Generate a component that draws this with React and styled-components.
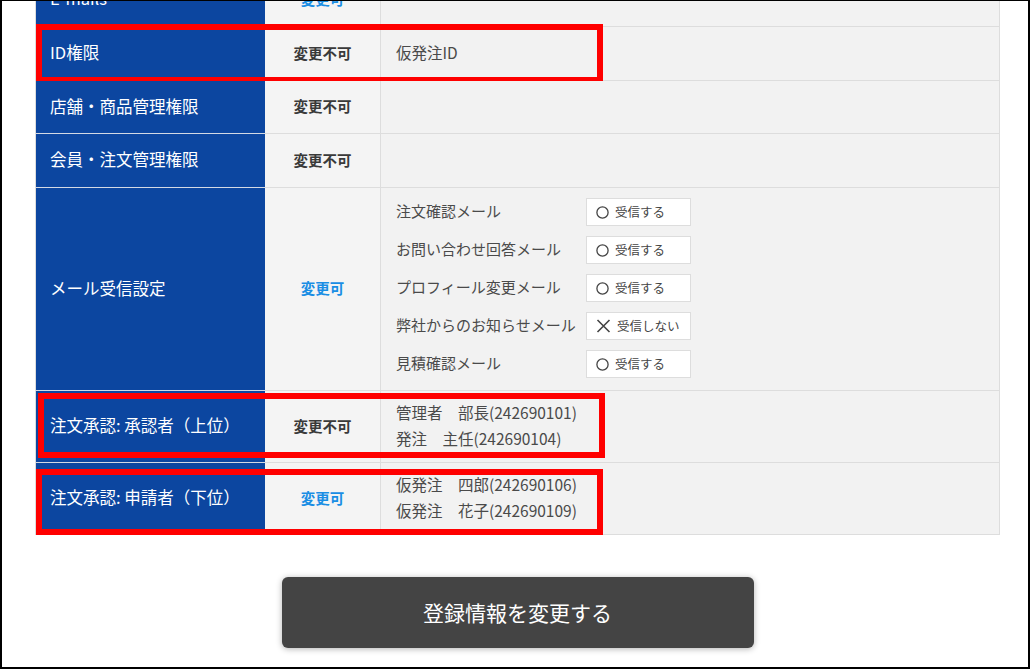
import React from "react";
import styled, { createGlobalStyle } from "styled-components";

const GlobalStyle = createGlobalStyle`
  html, body {
    margin: 0;
    padding: 0;
    background: #fff;
  }
  body {
    font-family: "Noto Sans CJK JP", "Noto Sans", sans-serif;
  }
`;

const Frame = styled.div`
  box-sizing: border-box;
  width: 1030px;
  height: 669px;
  border-top: 1px solid #000;
  border-left: 2px solid #000;
  border-right: 2px solid #000;
  border-bottom: 2px solid #000;
  padding: 0 28px 0 33px;
  overflow: hidden;
  background: #fff;
`;

const Table = styled.div`
  margin-top: -28px;
  width: 965px;
  box-sizing: border-box;
  border-right: 1px solid #ddd;
  border-left: 1px solid #ddd;
`;

const Row = styled.div`
  position: relative;
  display: grid;
  grid-template-columns: 229px 116px 1fr;
  min-height: ${(p) => p.$height || 54}px;
  box-sizing: border-box;

  ${(p) =>
    p.$mark &&
    `
    &::after {
      content: "";
      position: absolute;
      top: ${p.$mark.top}px;
      left: ${p.$mark.left}px;
      width: 567px;
      height: ${p.$mark.height}px;
      box-sizing: border-box;
      border: 6px solid #ff0000;
      pointer-events: none;
    }
  `}
`;

const Head = styled.div`
  display: flex;
  align-items: center;
  padding: 0 14px 3px;
  background: #0c46a0;
  color: #fff;
  font-size: 16.5px;
  line-height: 24px;
  border-bottom: 1px solid #d4d9e4;
  white-space: nowrap;
`;

const State = styled.div`
  display: flex;
  align-items: center;
  justify-content: center;
  padding-bottom: 3px;
  background: #f4f4f4;
  border-bottom: 1px solid #ddd;
  border-right: 1px solid #ddd;
  font-size: 14.5px;
  font-weight: 700;
  color: ${(p) => (p.$editable ? "#1a8ee4" : "#3a3a3a")};
`;

const Value = styled.div`
  display: flex;
  flex-direction: column;
  justify-content: center;
  padding: ${(p) => p.$pad || "0 15px 4px"};
  background: #f2f2f2;
  border-bottom: 1px solid #ddd;
  color: #4a4a4a;
  font-size: 15.5px;
  line-height: 26px;
  white-space: nowrap;
`;

const MailList = styled.div`
  display: flex;
  flex-direction: column;
  gap: 10px;
`;

const MailItem = styled.div`
  display: flex;
  align-items: center;
  height: 28px;
`;

const MailLabel = styled.span`
  width: 190px;
  font-size: 15px;
  color: #4a4a4a;
  margin-top: -2px;
`;

const Choice = styled.span`
  box-sizing: border-box;
  display: flex;
  align-items: center;
  gap: 6px;
  width: 105px;
  height: 28px;
  padding-left: 9px;
  background: #fff;
  border: 1px solid #ddd;
  font-size: 12.5px;
  color: #444;
`;

const SubmitWrap = styled.div`
  display: flex;
  justify-content: center;
  margin-top: 42px;
`;

const Submit = styled.button`
  width: 472px;
  height: 71px;
  padding-bottom: 3px;
  border: none;
  border-radius: 6px;
  background: #444;
  color: #fff;
  font-family: "Noto Sans CJK JP", "Noto Sans", sans-serif;
  font-size: 21px;
  box-shadow: 0 1px 6px rgba(0, 0, 0, 0.3);
  cursor: pointer;
`;

const OnIcon = () => (
  <svg width="13" height="13" viewBox="0 0 13 13">
    <circle cx="6.5" cy="6.5" r="5.6" fill="none" stroke="#444" strokeWidth="1.3" />
  </svg>
);

const OffIcon = () => (
  <svg width="15" height="14" viewBox="0 0 15 14">
    <path d="M1.5 1 L13.5 13 M13.5 1 L1.5 13" stroke="#444" strokeWidth="1.6" fill="none" />
  </svg>
);

const mails = [
  { label: "注文確認メール", on: true },
  { label: "お問い合わせ回答メール", on: true },
  { label: "プロフィール変更メール", on: true },
  { label: "弊社からのお知らせメール", on: false },
  { label: "見積確認メール", on: true },
];

const App = () => {
  return (
    <>
      <GlobalStyle />
      <Frame>
        <Table>
          <Row>
            <Head>E-mails</Head>
            <State $editable>変更可</State>
            <Value />
          </Row>
          <Row $mark={{ top: -3, left: 0, height: 59 }}>
            <Head>ID権限</Head>
            <State>変更不可</State>
            <Value>仮発注ID</Value>
          </Row>
          <Row $height={53}>
            <Head>店舗・商品管理権限</Head>
            <State>変更不可</State>
            <Value />
          </Row>
          <Row>
            <Head>会員・注文管理権限</Head>
            <State>変更不可</State>
            <Value />
          </Row>
          <Row $height={203}>
            <Head>メール受信設定</Head>
            <State $editable>変更可</State>
            <Value $pad="10px 15px 12px">
              <MailList>
                {mails.map((m) => (
                  <MailItem key={m.label}>
                    <MailLabel>{m.label}</MailLabel>
                    <Choice>
                      {m.on ? <OnIcon /> : <OffIcon />}
                      {m.on ? "受信する" : "受信しない"}
                    </Choice>
                  </MailItem>
                ))}
              </MailList>
            </Value>
          </Row>
          <Row $height={72} $mark={{ top: 2, left: 2, height: 65 }}>
            <Head>注文承認: 承認者（上位）</Head>
            <State>変更不可</State>
            <Value>
              <span>管理者　部長(242690101)</span>
              <span>発注　主任(242690104)</span>
            </Value>
          </Row>
          <Row $height={72} $mark={{ top: 6, left: 0, height: 66 }}>
            <Head>注文承認: 申請者（下位）</Head>
            <State $editable>変更可</State>
            <Value>
              <span>仮発注　四郎(242690106)</span>
              <span>仮発注　花子(242690109)</span>
            </Value>
          </Row>
        </Table>
        <SubmitWrap>
          <Submit>登録情報を変更する</Submit>
        </SubmitWrap>
      </Frame>
    </>
  );
};

export default App;
